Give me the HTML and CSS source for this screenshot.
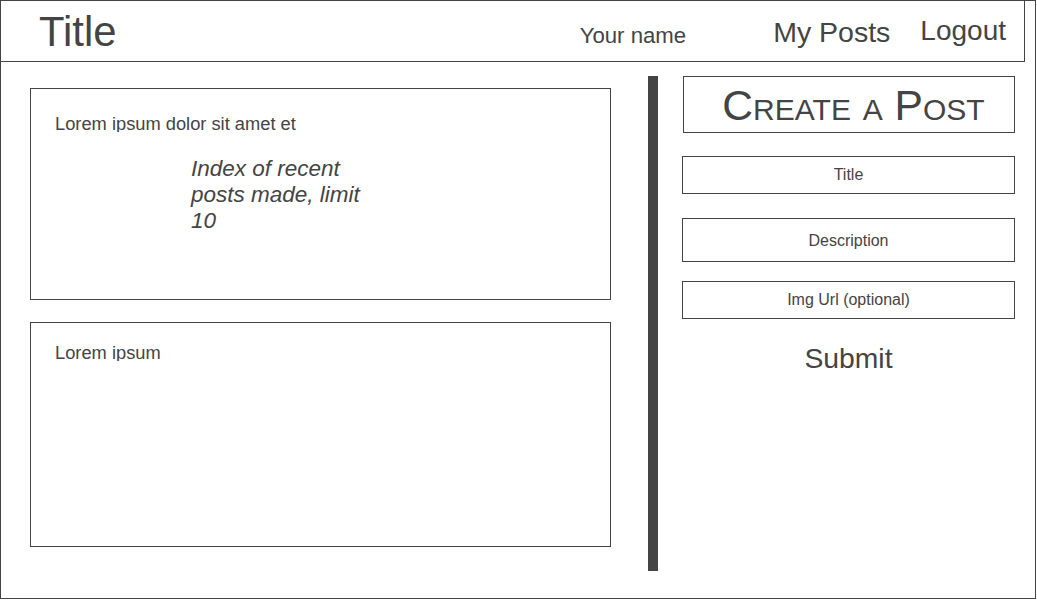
FILE: index.html
```html
<!DOCTYPE html>
<html lang="en">
<head>
<meta charset="utf-8">
<title>Wireframe</title>
<link rel="stylesheet" href="styles.css">
</head>
<body>
<div class="frame">
  <header class="header">
    <div class="site-title">Title</div>
    <div class="user-name">Your name</div>
    <a class="nav-link my-posts">My Posts</a>
    <a class="nav-link logout">Logout</a>
  </header>
  <main class="main">
    <section class="posts">
      <article class="card card-first">
        <div class="card-line">Lorem ipsum dolor sit amet et</div>
        <p class="note">Index of recent posts made, limit 10</p>
      </article>
      <article class="card card-second">
        <div class="card-line">Lorem ipsum</div>
      </article>
    </section>
    <div class="divider"></div>
    <aside class="create">
      <h2 class="create-title">Create a Post</h2>
      <div class="field field-title">Title</div>
      <div class="field field-desc">Description</div>
      <div class="field field-img">Img Url (optional)</div>
      <div class="submit">Submit</div>
    </aside>
  </main>
</div>
</body>
</html>
```

FILE: styles.css
```css
* { box-sizing: border-box; }
html, body { margin: 0; padding: 0; background: #fff; }
body {
  font-family: "Liberation Sans", Arial, sans-serif;
  color: #444;
}
.frame {
  width: 1036px;
  height: 599px;
  border: 1px solid #444;
  overflow: hidden;
}
.header {
  width: 1024px;
  height: 61px;
  border-right: 1px solid #444;
  border-bottom: 1px solid #444;
  display: flex;
  align-items: flex-start;
  padding-left: 38px;
  padding-right: 18px;
}
.site-title {
  font-size: 41.8px;
  line-height: 1;
  margin-top: 10px;
}
.user-name {
  font-size: 22.2px;
  line-height: 1;
  margin-top: 24px;
  margin-left: auto;
}
.nav-link {
  font-size: 28.5px;
  line-height: 1;
  color: #444;
  text-decoration: none;
}
.my-posts { margin-top: 17px; margin-left: 87px; }
.logout { margin-top: 16px; margin-left: 30px; font-size: 28px; }

.main {
  display: flex;
  align-items: flex-start;
  padding-left: 29px;
}
.posts {
  width: 581px;
  margin-top: 26px;
  display: flex;
  flex-direction: column;
  gap: 22px;
}
.card {
  border: 1px solid #444;
  padding-left: 24px;
}
.card-first { height: 212px; padding-top: 26px; }
.card-second { height: 225px; padding-top: 21px; }
.card-line {
  font-size: 18.3px;
  line-height: 18px;
  height: 17px;
  overflow: hidden;
}
.note {
  margin: 24px 0 0 136px;
  width: 180px;
  font-style: italic;
  font-size: 22.5px;
  line-height: 26px;
}
.divider {
  width: 10px;
  height: 495px;
  margin-top: 14px;
  margin-left: 37px;
  background: #444;
}
.create {
  width: 333px;
  margin-top: 14px;
  margin-left: 24px;
  display: flex;
  flex-direction: column;
}
.create-title {
  margin: 0 0 0 1px;
  width: 332px;
  height: 57px;
  border: 1px solid #444;
  font-size: 42.6px;
  font-weight: normal;
  font-variant: small-caps;
  line-height: 1;
  display: flex;
  align-items: center;
  justify-content: center;
  padding-left: 9px;
  padding-top: 1px;
}
.field {
  border: 1px solid #444;
  font-size: 16px;
  display: flex;
  align-items: center;
  justify-content: center;
}
.field-title { height: 38px; margin-top: 23px; }
.field-desc { height: 44px; margin-top: 24px; padding-top: 1px; }
.field-img { height: 38px; margin-top: 19px; }
.submit {
  margin-top: 25px;
  font-size: 28.3px;
  line-height: 1;
  text-align: center;
}
```
